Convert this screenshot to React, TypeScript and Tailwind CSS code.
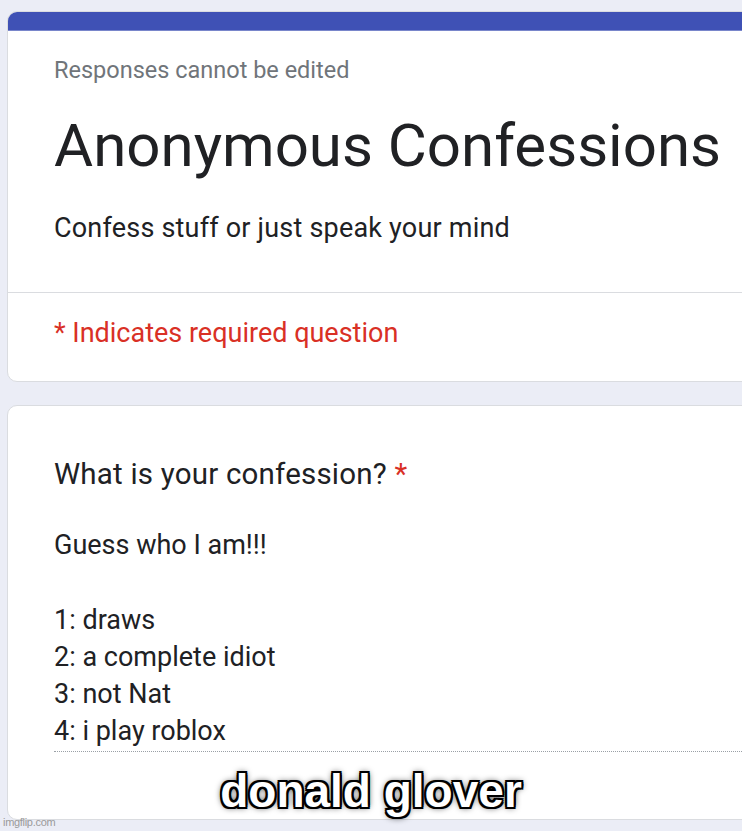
export default function App() {
  const lines = ["Guess who I am!!!", "", "1: draws", "2: a complete idiot", "3: not Nat", "4: i play roblox"];

  return (
    <div className="relative w-[742px] h-[831px] overflow-hidden bg-[#ebedf6] pt-[11px] pl-[7px] font-['Roboto',sans-serif]">
      {/* Form header card */}
      <div className="w-[800px] bg-white rounded-[10px] border border-[#dadce0] overflow-hidden">
        <div className="h-[19px] bg-[#3f51b5] border-b border-[#7986cb]" />
        <div className="pl-[46px]">
          <div className="mt-[24px] text-[23.5px] leading-[30px] text-[#70757a]">Responses cannot be edited</div>
          <h1 className="mt-[26px] text-[60px] leading-[70px] text-[#202124]">Anonymous Confessions</h1>
          <p className="mt-[29px] text-[27px] leading-[36px] tracking-[0.2px] text-[#202124]">Confess stuff or just speak your mind</p>
        </div>
        <div className="mt-[46px] border-t border-[#dadce0]" />
        <div className="pl-[46px] pt-[22px] pb-[30px] text-[27px] leading-[36px] text-[#d93025]">* Indicates required question</div>
      </div>

      {/* Question card */}
      <div className="mt-[23px] w-[800px] h-[415px] bg-white rounded-[10px] border border-[#dadce0] pl-[46px] pt-[50px]">
        <div className="text-[29.5px] leading-[36px] tracking-[0.2px] text-[#202124]">
          What is your confession? <span className="text-[#d93025]">*</span>
        </div>
        <div className="mt-[35px] border-b border-dotted border-[#9aa0a6] text-[27px] leading-[37.3px] text-[#202124]">
          {lines.map((l, i) => (
            <div key={i} className="h-[37.3px]">{l}</div>
          ))}
        </div>
      </div>

      {/* meme caption */}
      <div className="absolute left-0 right-0 top-[764px] text-center font-['Liberation_Sans',Arial,sans-serif] font-bold text-[46px] leading-[54px] text-white [text-shadow:_2px_2px_0_#000,_-2px_-2px_0_#000,_2px_-2px_0_#000,_-2px_2px_0_#000,_0_2px_0_#000,_0_-2px_0_#000,_2px_0_0_#000,_-2px_0_0_#000,_0_0_7px_#000]">
        donald glover
      </div>
      <div className="absolute left-[3px] bottom-[2px] text-[11px] leading-[14px] text-[#9a9a9a] font-['Liberation_Sans',Arial,sans-serif] tracking-[-0.3px]">
        imgflip.com
      </div>
    </div>
  );
}
